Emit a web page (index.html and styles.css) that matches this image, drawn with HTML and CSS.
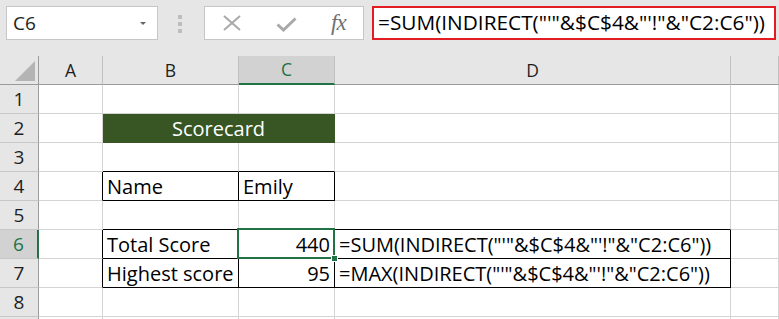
FILE: index.html
```html
<!DOCTYPE html>
<html lang="en">
<head>
    <meta charset="UTF-8">
    <title>Scorecard</title>
    <link rel="stylesheet" href="styles.css">
</head>
<body>

<div class="toolbar">
    <div class="name-box">
        <span class="cell-ref">C6</span>
        <span class="dropdown"></span>
    </div>
    <div class="grip"><span></span><span></span><span></span></div>
    <div class="fx-buttons">
        <svg class="icon-cancel" width="18" height="16" viewBox="0 0 18 16">
            <path d="M1 1 L17 15 M17 1 L1 15" stroke="#a9a9a9" stroke-width="2" fill="none"/>
        </svg>
        <svg class="icon-enter" width="21" height="15" viewBox="0 0 21 15">
            <path d="M1.5 7.5 L7.5 13 L19.5 1.5" stroke="#a9a9a9" stroke-width="3" fill="none"/>
        </svg>
        <span class="fx">fx</span>
    </div>
    <div class="formula-input">=SUM(INDIRECT("'"&amp;$C$4&amp;"'!"&amp;"C2:C6"))</div>
</div>

<table class="sheet">
    <tr class="col-heads">
        <th class="corner"><span class="select-all"></span></th>
        <th class="w-a">A</th>
        <th class="w-b">B</th>
        <th class="w-c sel-col">C</th>
        <th class="w-d">D</th>
        <th class="w-e"></th>
    </tr>
    <tr>
        <th class="rh">1</th>
        <td></td><td></td><td></td><td></td><td></td>
    </tr>
    <tr>
        <th class="rh">2</th>
        <td></td>
        <td class="title" colspan="2">Scorecard</td>
        <td></td><td></td>
    </tr>
    <tr>
        <th class="rh">3</th>
        <td></td><td class="bb"></td><td class="bb"></td><td></td><td></td>
    </tr>
    <tr>
        <th class="rh">4</th>
        <td class="br"></td>
        <td class="br bb">Name</td>
        <td class="br bb">Emily</td>
        <td></td><td></td>
    </tr>
    <tr>
        <th class="rh">5</th>
        <td></td><td class="bb"></td><td class="bb"></td><td class="bb"></td><td></td>
    </tr>
    <tr>
        <th class="rh sel-row">6</th>
        <td class="br"></td>
        <td class="br bb">Total Score</td>
        <td class="br bb num active">440</td>
        <td class="br bb">=SUM(INDIRECT("'"&amp;$C$4&amp;"'!"&amp;"C2:C6"))</td>
        <td></td>
    </tr>
    <tr>
        <th class="rh">7</th>
        <td class="br"></td>
        <td class="br bb">Highest score</td>
        <td class="br bb num">95</td>
        <td class="br bb">=MAX(INDIRECT("'"&amp;$C$4&amp;"'!"&amp;"C2:C6"))</td>
        <td></td>
    </tr>
    <tr>
        <th class="rh">8</th>
        <td></td><td></td><td></td><td></td><td></td>
    </tr>
    <tr>
        <th class="rh"></th>
        <td></td><td></td><td></td><td></td><td></td>
    </tr>
</table>

</body>
</html>
```

FILE: styles.css
```css
body {
    margin: 0;
    background: #e6e6e6;
    font-family: "Open Sans", "Noto Sans", sans-serif;
    color: #000;
    overflow: hidden;
}

/* formula bar */
.toolbar {
    display: flex;
    align-items: flex-start;
    height: 56px;
    padding: 6px 0 0 6px;
    box-sizing: border-box;
}

.name-box {
    width: 152px;
    height: 34px;
    box-sizing: border-box;
    background: #fff;
    border: 1px solid #c6c6c6;
    display: flex;
    align-items: center;
    justify-content: space-between;
    padding: 0 11px 0 6px;
}

.cell-ref {
    font-size: 19px;
    color: #222;
}

.dropdown {
    width: 0;
    height: 0;
    border-left: 3px solid transparent;
    border-right: 3px solid transparent;
    border-top: 3px solid #666;
}

.grip {
    margin: 9px 0 0 20px;
    width: 4px;
    display: flex;
    flex-direction: column;
    gap: 3px;
}

.grip span {
    height: 4px;
    background: #bdbdbd;
}

.fx-buttons {
    margin-left: 22px;
    width: 160px;
    height: 34px;
    box-sizing: border-box;
    background: #fff;
    border: 1px solid #c6c6c6;
    display: flex;
    align-items: center;
}

.icon-cancel {
    margin-left: 18px;
}

.icon-enter {
    margin-left: 35px;
    margin-top: 2px;
}

.fx {
    margin-left: 34px;
    font-family: "Liberation Serif", serif;
    font-style: italic;
    font-size: 23px;
    color: #707070;
    letter-spacing: -1px;
}

.formula-input {
    margin-left: 8px;
    width: 404px;
    height: 34px;
    box-sizing: border-box;
    background: #fff;
    border: 2px solid #e31b23;
    padding-left: 4px;
    font-size: 20.8px;
    line-height: 29px;
    white-space: nowrap;
    overflow: hidden;
}

/* grid */
.sheet {
    border-collapse: separate;
    border-spacing: 0;
    table-layout: fixed;
    width: 779px;
    background: #fff;
}

.sheet th,
.sheet td {
    box-sizing: border-box;
    height: 29px;
    padding: 1px 4px 0 4px;
    border-right: 1px solid #d4d4d4;
    border-bottom: 1px solid #d4d4d4;
    font-size: 20px;
    font-weight: normal;
    line-height: 27px;
    white-space: nowrap;
    overflow: visible;
    text-align: left;
}

.col-heads th {
    background: #e6e6e6;
    border-right: 1px solid #c0c0c0;
    border-bottom: 1px solid #9b9b9b;
    text-align: center;
    font-size: 17.5px;
    color: #1e1e1e;
    padding: 0;
}

.corner {
    width: 39px;
    text-align: right !important;
    vertical-align: bottom;
    line-height: 0 !important;
    padding: 0 3px 3px 0 !important;
    border-right-color: #9b9b9b !important;
}

.select-all {
    display: inline-block;
    width: 0;
    height: 0;
    border-left: 20px solid transparent;
    border-bottom: 20px solid #b4b4b4;
}

.w-a { width: 64px; }
.w-b { width: 136px; }
.w-c { width: 96px; }
.w-d { width: 396px; }

.col-heads .sel-col {
    background: #d2d2d2;
    color: #217346;
    border-bottom: 2px solid #217346;
}

.sheet .rh {
    background: #e6e6e6;
    border-right: 1px solid #9b9b9b;
    border-bottom: 1px solid #c6c6c6;
    text-align: center;
    font-size: 19px;
    color: #1e1e1e;
    padding: 1px 0 0 0;
}

.sheet .sel-row {
    background: #d2d2d2;
    color: #217346;
    border-right: 2px solid #217346;
}

.sheet .title {
    background: #375623;
    color: #fff;
    text-align: center;
    border-right-color: #375623;
    border-bottom-color: #375623;
}

.sheet .br { border-right-color: #000; }
.sheet .bb { border-bottom-color: #000; }

.sheet .num { text-align: right; }

.active {
    position: relative;
}

.active::after {
    content: "";
    position: absolute;
    top: -2px;
    left: -2px;
    right: -1px;
    bottom: -1px;
    border: 2px solid #217346;
}

.active::before {
    content: "";
    position: absolute;
    right: -4px;
    bottom: -4px;
    width: 5px;
    height: 5px;
    background: #217346;
    border: 1px solid #fff;
    z-index: 1;
}
```
